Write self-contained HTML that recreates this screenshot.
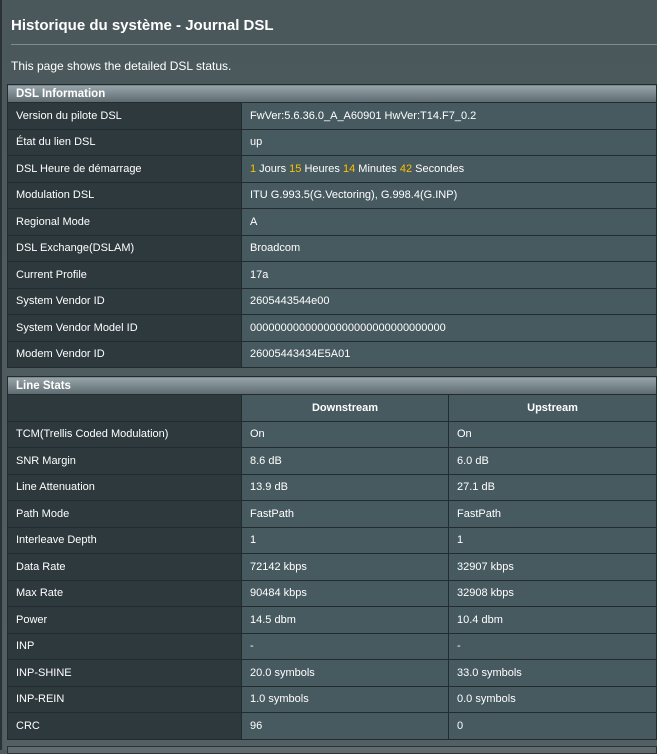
<!DOCTYPE html>
<html><head><meta charset="utf-8"><style>
body{margin:0;width:657px;height:750px;overflow:hidden;background:#4d5a5e;font-family:"Liberation Sans",sans-serif;color:#fff;font-size:11px;position:relative}
.lb{position:absolute;left:0;top:0;width:2px;height:750px;background:#2a3236}
.wrap{position:absolute;left:3px;top:0;right:0;height:750px;background:linear-gradient(#4a575b,#525f63)}
h1{position:absolute;left:8px;top:17px;margin:0;font-size:15px;font-weight:bold;color:#fff}
.hr{position:absolute;left:8px;right:0;top:44px;height:1px;background:#7f8b8e}
.desc{position:absolute;left:8px;top:59px;font-size:12px;color:#fff}
table{position:absolute;left:4px;width:650px;border-collapse:collapse;table-layout:fixed}
td,th{border:1px solid #222b2e;height:25.5px;padding:0 0 0 8px;font-size:11px;text-align:left;font-weight:normal}
td.l{background:#2e393d}
td.v{background:#475a60}
th.h{background:linear-gradient(#98a5aa,#5d6a6f);height:17px;font-weight:bold;font-size:11.5px;padding-left:8px}
th.c{background:#475a60;text-align:center;font-weight:bold;padding:0}
.y{color:#ffc000}
.bot{position:absolute;left:7px;right:0;top:746px;height:6px;background:#5f6b6f;border:1px solid #2a3236}
</style></head><body>
<div class="lb"></div><div class="wrap">
<h1>Historique du système - Journal DSL</h1>
<div class="hr"></div>
<div class="desc">This page shows the detailed DSL status.</div>
<table style="top:84px">
<colgroup><col style="width:234px"><col></colgroup>
<tr><th class="h" colspan="2">DSL Information</th></tr>
<tr><td class="l">Version du pilote DSL</td><td class="v">FwVer:5.6.36.0_A_A60901 HwVer:T14.F7_0.2</td></tr>
<tr><td class="l">État du lien DSL</td><td class="v">up</td></tr>
<tr><td class="l">DSL Heure de démarrage</td><td class="v"><span class="y">1</span> Jours <span class="y">15</span> Heures <span class="y">14</span> Minutes <span class="y">42</span> Secondes</td></tr>
<tr><td class="l">Modulation DSL</td><td class="v">ITU G.993.5(G.Vectoring), G.998.4(G.INP)</td></tr>
<tr><td class="l">Regional Mode</td><td class="v">A</td></tr>
<tr><td class="l">DSL Exchange(DSLAM)</td><td class="v">Broadcom</td></tr>
<tr><td class="l">Current Profile</td><td class="v">17a</td></tr>
<tr><td class="l">System Vendor ID</td><td class="v">2605443544e00</td></tr>
<tr><td class="l">System Vendor Model ID</td><td class="v">00000000000000000000000000000000</td></tr>
<tr><td class="l">Modem Vendor ID</td><td class="v">26005443434E5A01</td></tr>
</table>
<table style="top:376px">
<colgroup><col style="width:234px"><col style="width:207px"><col></colgroup>
<tr><th class="h" colspan="3">Line Stats</th></tr>
<tr><td class="l"></td><th class="c">Downstream</th><th class="c">Upstream</th></tr>
<tr><td class="l">TCM(Trellis Coded Modulation)</td><td class="v">On</td><td class="v">On</td></tr>
<tr><td class="l">SNR Margin</td><td class="v">8.6 dB</td><td class="v">6.0 dB</td></tr>
<tr><td class="l">Line Attenuation</td><td class="v">13.9 dB</td><td class="v">27.1 dB</td></tr>
<tr><td class="l">Path Mode</td><td class="v">FastPath</td><td class="v">FastPath</td></tr>
<tr><td class="l">Interleave Depth</td><td class="v">1</td><td class="v">1</td></tr>
<tr><td class="l">Data Rate</td><td class="v">72142 kbps</td><td class="v">32907 kbps</td></tr>
<tr><td class="l">Max Rate</td><td class="v">90484 kbps</td><td class="v">32908 kbps</td></tr>
<tr><td class="l">Power</td><td class="v">14.5 dbm</td><td class="v">10.4 dbm</td></tr>
<tr><td class="l">INP</td><td class="v">-</td><td class="v">-</td></tr>
<tr><td class="l">INP-SHINE</td><td class="v">20.0 symbols</td><td class="v">33.0 symbols</td></tr>
<tr><td class="l">INP-REIN</td><td class="v">1.0 symbols</td><td class="v">0.0 symbols</td></tr>
<tr><td class="l">CRC</td><td class="v">96</td><td class="v">0</td></tr>
</table>
</div>
<div class="bot"></div>
</body></html>
